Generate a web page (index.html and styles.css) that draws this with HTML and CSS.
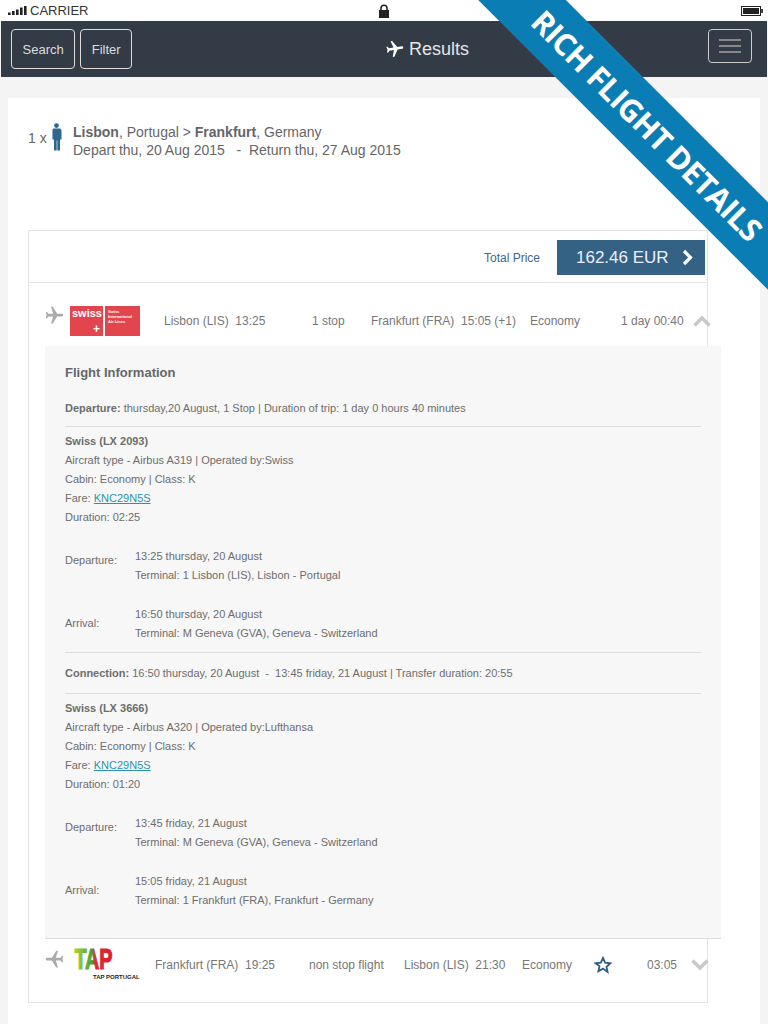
FILE: index.html
```html
<!DOCTYPE html>
<html lang="en">
<head>
  <meta charset="UTF-8" />
  <meta name="viewport" content="width=device-width, initial-scale=1.0"/>
  <title>Results</title>
  <link rel="stylesheet" href="styles.css">
</head>
<body>

<!-- Device status bar -->
<div class="status-bar">
  <div class="carrier">
    <svg class="signal" width="19" height="9" viewBox="0 0 19 9" fill="#222"><rect x="0" y="6.500" width="2.600" height="2.500"/><rect x="4" y="5" width="2.600" height="4"/><rect x="8" y="3.500" width="2.600" height="5.500"/><rect x="12" y="1.500" width="2.600" height="7.500"/><rect x="16" y="0" width="2.600" height="9"/></svg>
    <span>CARRIER</span>
  </div>
  <svg class="lock" width="12" height="14" viewBox="0 0 12 14"><path d="M3 7V4.200a3 3 0 0 1 6 0V7" fill="none" stroke="#222" stroke-width="1.600"/><rect x="1" y="6" width="10" height="8" fill="#222"/></svg>
  <svg class="battery" width="22" height="10" viewBox="0 0 22 10"><rect x="0.500" y="0.500" width="19" height="9" fill="none" stroke="#222"/><rect x="2" y="2" width="16" height="6" fill="#222"/><rect x="20" y="3" width="2" height="4" fill="#444"/></svg>
</div>

<nav class="navbar">
  <button class="nav-btn">Search</button>
  <button class="nav-btn">Filter</button>
  <div class="nav-title">
    <svg class="plane-nav" width="20" height="20" viewBox="0 0 24 24"><path fill="#fff" transform="rotate(82 12 12)" d="M21 16v-2l-8-5V3.500c0-.83-.67-1.500-1.500-1.500S10 2.670 10 3.500V9l-8 5v2l8-2.500V19l-2 1.500V22l3.500-1 3.500 1v-1.500L13 19v-5.500l8 2.500z"/></svg>
    <span>Results</span>
  </div>
  <button class="nav-toggle"><i></i><i></i><i></i></button>
</nav>

<div class="ribbon">RICH FLIGHT DETAILS</div>

<main class="page">
  <div class="trip-summary">
    <span class="pax">1 x</span>
    <svg class="person" width="11" height="28" viewBox="0 0 11 28" fill="#2f6690"><circle cx="5.500" cy="2.600" r="2.400"/><path d="M2 5.500h7l1.500 1.500v9.500h-1.500v11h-2.700v-10h-.6v10h-2.700v-11h-1.500v-9.500z"/></svg>
    <div class="route">
      <div><b>Lisbon</b>, Portugal &gt; <b>Frankfurt</b>, Germany</div>
      <div>Depart thu, 20 Aug 2015 &nbsp; - &nbsp;Return thu, 27 Aug 2015</div>
    </div>
  </div>

  <section class="results">
    <div class="price-bar">
      <span class="price-label">Total Price</span>
      <a class="price-btn">
        <span>162.46 EUR</span>
        <svg width="13" height="17" viewBox="0 0 13 17"><path d="M3 2l6.500 6.500L3 15" fill="none" stroke="#fff" stroke-width="3.200"/></svg>
      </a>
    </div>

    <div class="flight-row outbound">
      <svg class="plane" width="21" height="21" viewBox="0 0 24 24"><path fill="#aaa" transform="rotate(90 12 12)" d="M21 16v-2l-8-5V3.500c0-.83-.67-1.500-1.500-1.500S10 2.670 10 3.500V9l-8 5v2l8-2.500V19l-2 1.500V22l3.500-1 3.500 1v-1.500L13 19v-5.500l8 2.500z"/></svg>
      <div class="swiss-logo">
        <div class="swiss-left"><b>swiss</b><em>+</em></div>
        <div class="swiss-right">Swiss International Air Lines</div>
      </div>
      <span class="from">Lisbon (LIS)&nbsp; 13:25</span>
      <span class="stops">1 stop</span>
      <span class="to">Frankfurt (FRA)&nbsp; 15:05 (+1)</span>
      <span class="cabin">Economy</span>
      <span class="duration">1 day 00:40</span>
      <svg class="chevron" width="18" height="12" viewBox="0 0 18 12"><path d="M1.500 10.500L9 3l7.500 7.500" fill="none" stroke="#c8c8c8" stroke-width="3.500"/></svg>
    </div>

    <div class="flight-info">
      <h4>Flight Information</h4>
      <p class="info-head"><b>Departure:</b> thursday,20 August, 1 Stop | Duration of trip: 1 day 0 hours 40 minutes</p>

      <div class="leg">
        <p><b>Swiss (LX 2093)</b></p>
        <p>Aircraft type - Airbus A319 | Operated by:Swiss</p>
        <p>Cabin: Economy | Class: K</p>
        <p>Fare: <a href="#">KNC29N5S</a></p>
        <p>Duration: 02:25</p>
        <div class="stop-row dep">
          <span>Departure:</span>
          <div><p>13:25 thursday, 20 August</p><p>Terminal: 1 Lisbon (LIS), Lisbon - Portugal</p></div>
        </div>
        <div class="stop-row arr">
          <span>Arrival:</span>
          <div><p>16:50 thursday, 20 August</p><p>Terminal: M Geneva (GVA), Geneva - Switzerland</p></div>
        </div>
      </div>

      <p class="connection"><b>Connection:</b> 16:50 thursday, 20 August &nbsp;-&nbsp; 13:45 friday, 21 August | Transfer duration: 20:55</p>

      <div class="leg">
        <p><b>Swiss (LX 3666)</b></p>
        <p>Aircraft type - Airbus A320 | Operated by:Lufthansa</p>
        <p>Cabin: Economy | Class: K</p>
        <p>Fare: <a href="#">KNC29N5S</a></p>
        <p>Duration: 01:20</p>
        <div class="stop-row dep">
          <span>Departure:</span>
          <div><p>13:45 friday, 21 August</p><p>Terminal: M Geneva (GVA), Geneva - Switzerland</p></div>
        </div>
        <div class="stop-row arr">
          <span>Arrival:</span>
          <div><p>15:05 friday, 21 August</p><p>Terminal: 1 Frankfurt (FRA), Frankfurt - Germany</p></div>
        </div>
      </div>
    </div>

    <div class="flight-row inbound">
      <svg class="plane flip" width="21" height="21" viewBox="0 0 24 24"><path fill="#aaa" transform="rotate(90 12 12)" d="M21 16v-2l-8-5V3.500c0-.83-.67-1.500-1.500-1.500S10 2.670 10 3.500V9l-8 5v2l8-2.500V19l-2 1.500V22l3.500-1 3.500 1v-1.500L13 19v-5.500l8 2.500z"/></svg>
      <div class="tap-logo">
        <svg class="tap-mark" width="44" height="24" viewBox="0 0 44 24">
          <defs>
            <linearGradient id="tapfill" x1="0" x2="1" y1="0" y2="0">
              <stop offset="0" stop-color="#b2d235"/>
              <stop offset="0.45" stop-color="#3fa33c"/>
              <stop offset="0.55" stop-color="#e02b33"/>
              <stop offset="1" stop-color="#d81f2a"/>
            </linearGradient>
          </defs>
          <text x="0.500" y="21" font-size="29" font-weight="bold" textLength="38" lengthAdjust="spacingAndGlyphs" fill="url(#tapfill)" stroke="url(#tapfill)" stroke-width="1.200">TAP</text>
        </svg>
        <span class="tap-name">TAP PORTUGAL</span>
      </div>
      <span class="from">Frankfurt (FRA)&nbsp; 19:25</span>
      <span class="stops">non stop flight</span>
      <span class="to">Lisbon (LIS)&nbsp; 21:30</span>
      <span class="cabin">Economy</span>
      <svg class="star" width="18" height="18" viewBox="0 0 24 24"><path d="M12 2.500l2.900 6.400 7 .8-5.200 4.700 1.400 6.900L12 16.800l-6.100 3.500 1.400-6.900L2.100 9.700l7-.8z" fill="none" stroke="#2f5f85" stroke-width="2.400"/></svg>
      <span class="duration">03:05</span>
      <svg class="chevron" width="18" height="12" viewBox="0 0 18 12"><path d="M1.500 1.500L9 9l7.500-7.500" fill="none" stroke="#c8c8c8" stroke-width="3.500"/></svg>
    </div>
  </section>
</main>

</body>
</html>
```

FILE: styles.css
```css
* { margin: 0; padding: 0; box-sizing: border-box; }
html, body { height: 1024px; overflow: hidden; }
body {
  position: relative;
  font-family: "Liberation Sans", Arial, sans-serif;
  background: #f4f4f4;
  color: #666;
}

/* Status bar */
.status-bar {
  height: 21px;
  background: #fff;
  display: flex;
  align-items: center;
  padding: 0 5px 0 8px;
}
.carrier {
  display: flex;
  align-items: center;
  gap: 3px;
  width: 370px;
  font-size: 13px;
  color: #333;
}
.battery { margin-left: auto; }

/* Navbar */
.navbar {
  height: 56px;
  margin: 0 1px;
  background: #333b47;
  display: flex;
  align-items: flex-start;
  padding: 8px 15px 0 10px;
  gap: 5px;
}
.nav-btn {
  height: 40px;
  padding: 0 10.500px;
  background: transparent;
  border: 1px solid #ddd;
  border-radius: 4px;
  color: #ddd;
  font-family: inherit;
  font-size: 13px;
}
.nav-title {
  display: flex;
  align-items: center;
  gap: 4px;
  margin-left: 248px;
  height: 40px;
  color: #e6e6e6;
  font-size: 18px;
}
.nav-toggle {
  margin-left: auto;
  width: 44px;
  height: 34px;
  background: transparent;
  border: 1px solid #ccc;
  border-radius: 4px;
  display: flex;
  flex-direction: column;
  align-items: center;
  justify-content: center;
  gap: 4px;
}
.nav-toggle i {
  display: block;
  width: 22px;
  height: 2px;
  background: #888;
}

/* Corner ribbon */
.ribbon {
  position: absolute;
  left: 395px;
  top: 92px;
  width: 500px;
  height: 62px;
  line-height: 62px;
  transform: rotate(45deg);
  background: #0a7db5;
  color: #fff;
  text-align: center;
  padding-left: 6px;
  font-family: "Open Sans", sans-serif;
  font-weight: 700;
  font-size: 31px;
  letter-spacing: -0.7px;
}

/* Page card */
.page {
  margin: 21px 8px 0;
  height: 926px;
  background: #fff;
  padding: 25px 20px 0;
}
.trip-summary {
  display: flex;
  align-items: flex-start;
  height: 107px;
  font-size: 14px;
  line-height: 18px;
}
.pax { margin-top: 6px; width: 23px; }
.person { margin-right: 11px; }

/* Results box */
.results {
  width: 680px;
  height: 773px;
  border: 1px solid #e4e4e4;
}
.price-bar {
  height: 52px;
  border-bottom: 1px solid #e4e4e4;
  display: flex;
  align-items: flex-start;
  justify-content: flex-end;
  padding: 9px 2px 0 0;
}
.price-label {
  margin: 11px 17px 0 0;
  font-size: 12px;
  color: #3c6a8e;
}
.price-btn {
  width: 148px;
  height: 35px;
  background: #336285;
  color: #eef;
  display: flex;
  align-items: center;
  justify-content: space-between;
  padding: 0 11px 0 19px;
  font-size: 17px;
}

/* Flight rows */
.flight-row {
  display: grid;
  align-items: center;
  padding-left: 16px;
  font-size: 12px;
  color: #777;
}
.outbound {
  height: 63px;
  padding-top: 13px;
  grid-template-columns: 25px 94px 148px 59px 159px 91px 72px 18px;
}
.inbound {
  height: 63px;
  padding-bottom: 12px;
  grid-template-columns: 29px 81px 154px 95px 118px 72px 53px 44px 18px;
}
.plane { margin: -11px 0 0 -1px; }
.flip { transform: scaleX(-1); }
.swiss-logo {
  display: flex;
  gap: 2px;
  width: 70px;
  height: 30px;
  color: #fff;
}
.swiss-left {
  width: 35px;
  background: #e2454e;
  position: relative;
  padding: 1px 0 0 2px;
  font-size: 11px;
  line-height: 12px;
}
.swiss-left em {
  position: absolute;
  right: 3px;
  bottom: 0;
  font-style: normal;
  font-weight: bold;
  font-size: 12px;
  line-height: 14px;
}
.swiss-right {
  flex: 1;
  background: #e2454e;
  padding: 3px 8px 0 3px;
  font-size: 4px;
  line-height: 5px;
  font-weight: bold;
}
.tap-logo {
  position: relative;
  height: 33px;
}
.tap-mark { display: block; overflow: visible; }
.tap-name {
  position: absolute;
  left: 19px;
  top: 26px;
  white-space: nowrap;
  font-size: 6px;
  line-height: 7px;
  font-weight: bold;
  color: #222;
}

/* Expanded flight details */
.flight-info {
  width: 676px;
  height: 593px;
  margin-left: 16px;
  padding: 0 20px;
  background: #f7f7f7;
  border-bottom: 1px solid #ddd;
  font-size: 11px;
  line-height: 19px;
  color: #6d6d6d;
}
.flight-info h4 {
  padding-top: 17px;
  font-size: 13px;
  line-height: 19px;
  color: #666;
}
.info-head {
  padding-top: 17px;
  padding-bottom: 8px;
  border-bottom: 1px solid #ddd;
}
.leg { padding-top: 5px; }
.flight-info a { color: #2a93ad; }
.stop-row { display: flex; }
.stop-row > span { width: 70px; }
.dep { margin-top: 20px; }
.dep > span { padding-top: 4px; }
.arr { margin-top: 20px; }
.arr > span { padding-top: 9px; }
.connection {
  margin-top: 9px;
  padding: 11px 0 10px;
  border-top: 1px solid #ddd;
  border-bottom: 1px solid #ddd;
}
```
